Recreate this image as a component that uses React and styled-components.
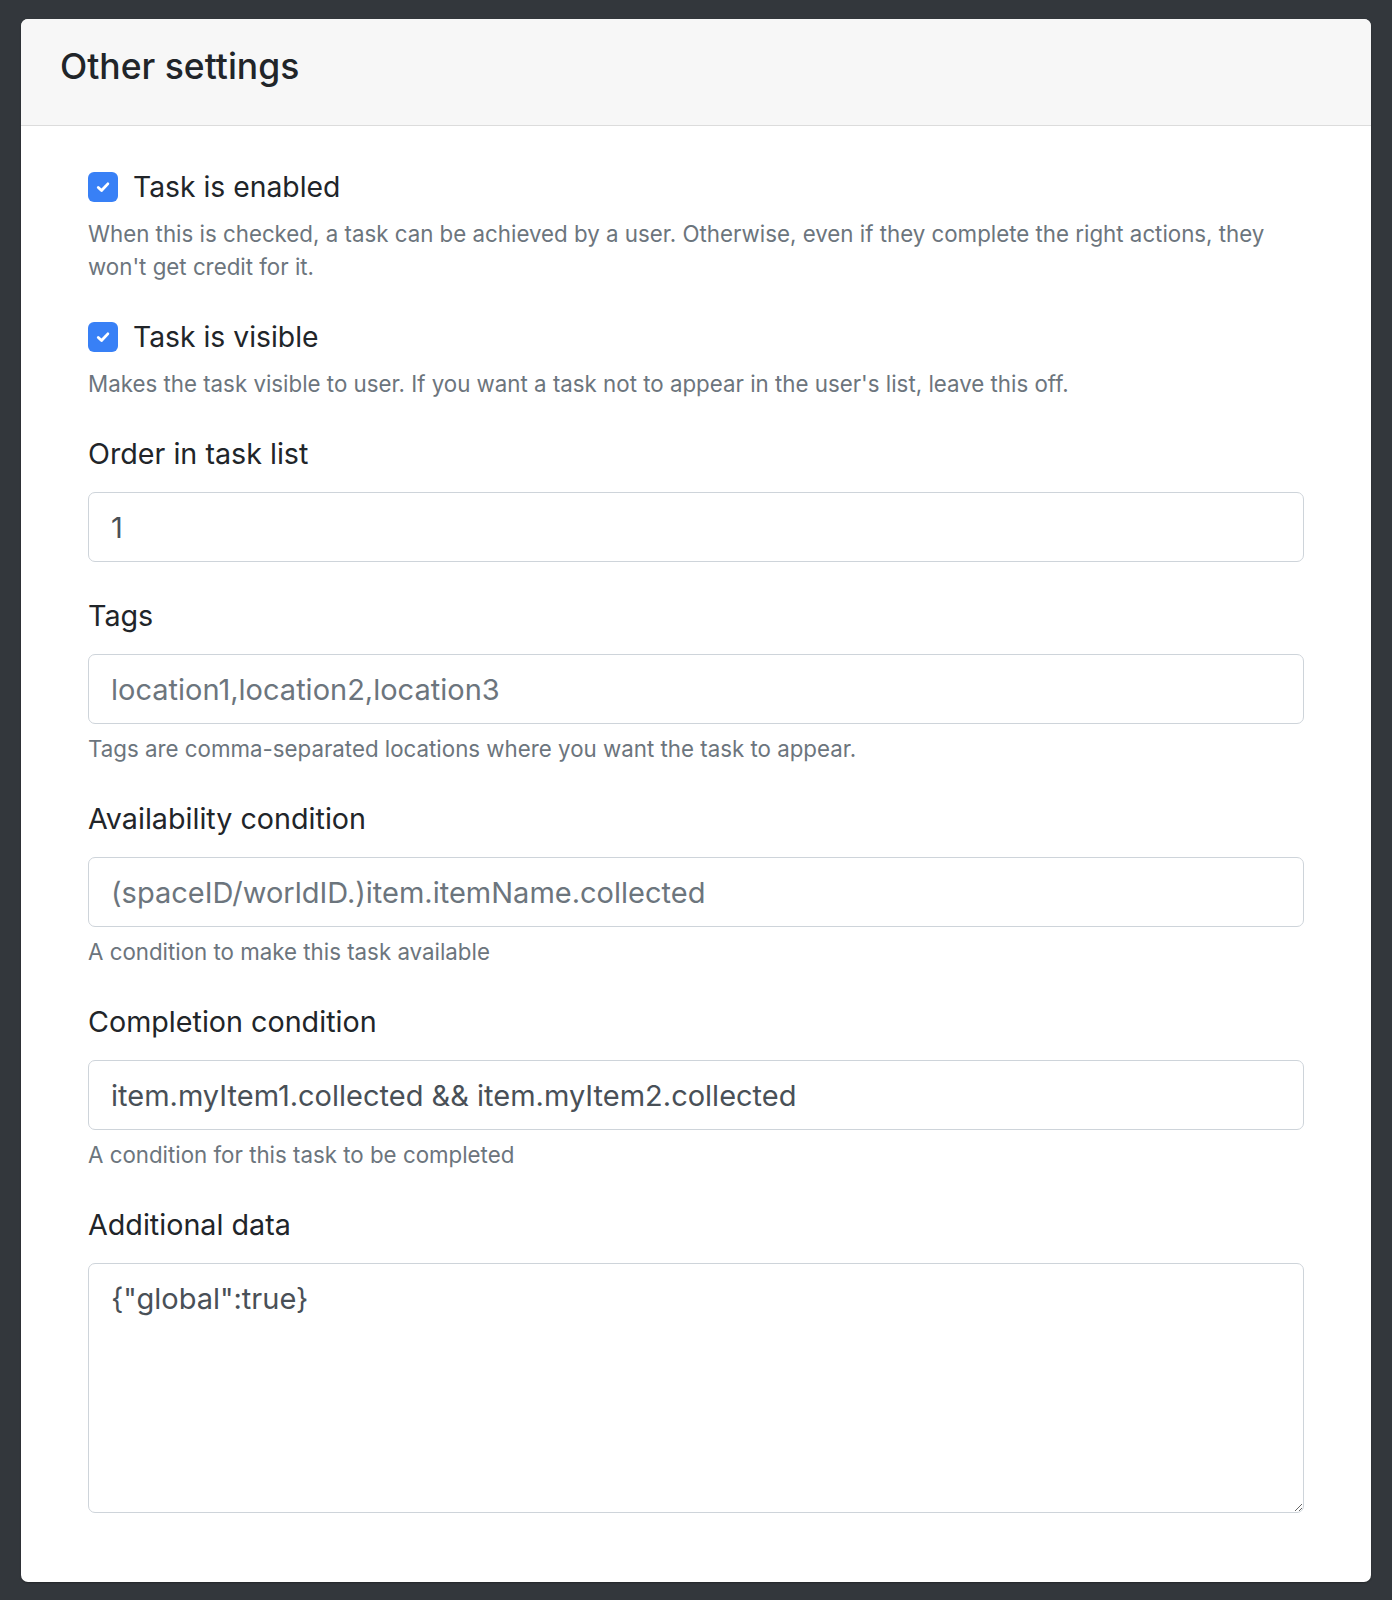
import React from 'react'
import styled, { createGlobalStyle } from 'styled-components'

const GlobalStyle = createGlobalStyle`
  html, body {
    margin: 0;
    padding: 0;
    background: #33373c;
  }
  body {
    font-family: Inter, "Noto Sans", "Liberation Sans", sans-serif;
    color: #212529;
  }
  * {
    box-sizing: border-box;
  }
`

const Page = styled.div`
  min-height: 1600px;
  padding: 19px 21px 20px;
`

const Card = styled.section`
  background: #fff;
  border-radius: 7px;
  overflow: hidden;
  box-shadow: 0 1px 2px rgba(0, 0, 0, 0.3);
`

const CardHeader = styled.header`
  background: #f7f7f7;
  border-bottom: 1px solid #dcdcdc;
  height: 107px;
  padding: 27px 39px 0;
`

const Title = styled.h2`
  margin: 0;
  font-size: 35.5px;
  line-height: 42px;
  font-weight: 500;
  color: #212529;
`

const CardBody = styled.div`
  padding: 46px 67px 69px;
  display: flex;
  flex-direction: column;
`

const Group = styled.div`
  display: flex;
  flex-direction: column;
  margin-bottom: ${p => p.$gap || 36}px;
  &:last-child {
    margin-bottom: 0;
  }
`

const CheckRow = styled.label`
  display: flex;
  align-items: center;
  gap: 15px;
  height: 30px;
  font-size: 28.3px;
  line-height: 32px;
  color: #212529;
`

const CheckBox = styled.span`
  width: 30px;
  height: 30px;
  border-radius: 6px;
  background: #3880f6;
  display: flex;
  align-items: center;
  justify-content: center;
  flex-shrink: 0;
`

const Label = styled.label`
  font-size: 28.7px;
  line-height: 36px;
  color: #212529;
  margin-bottom: 20px;
`

const Help = styled.small`
  display: block;
  font-size: 22.3px;
  line-height: 33px;
  color: #6c757d;
  margin-top: ${p => p.$top || 8}px;
`

const Input = styled.input`
  width: 100%;
  height: 70px;
  padding: 0 22px;
  font-family: inherit;
  font-size: 29px;
  color: #495057;
  background: #fff;
  border: 1px solid #ced4da;
  border-radius: 7px;
  outline: none;
  &::placeholder {
    color: #6c757d;
    opacity: 1;
  }
`

const TextArea = styled.textarea`
  width: 100%;
  height: 250px;
  padding: 12px 22px;
  font-family: inherit;
  font-size: 29px;
  line-height: 45px;
  color: #495057;
  background: #fff;
  border: 1px solid #ced4da;
  border-radius: 7px;
  outline: none;
  resize: vertical;
  display: block;
`

const Check = () => (
  <CheckBox>
    <svg width="18" height="18" viewBox="0 0 16 16">
      <path d="M3.8 8.4l2.9 2.7 5.6-5.9" fill="none" stroke="#fff" strokeWidth="2.5" strokeLinecap="round" strokeLinejoin="round" />
    </svg>
  </CheckBox>
)

const fields = [
  { label: 'Order in task list', value: '1' },
  { label: 'Tags', placeholder: 'location1,location2,location3', help: 'Tags are comma-separated locations where you want the task to appear.' },
  { label: 'Availability condition', placeholder: '(spaceID/worldID.)item.itemName.collected', help: 'A condition to make this task available' },
  { label: 'Completion condition', value: 'item.myItem1.collected && item.myItem2.collected', help: 'A condition for this task to be completed' },
]

const App = () => (
  <Page>
    <GlobalStyle />
    <Card>
      <CardHeader>
        <Title>Other settings</Title>
      </CardHeader>
      <CardBody>
        <Group $gap={39}>
          <CheckRow><Check />Task is enabled</CheckRow>
          <Help $top={15}>
            When this is checked, a task can be achieved by a user. Otherwise, even if they complete the right actions, they won't get credit for it.
          </Help>
        </Group>
        <Group>
          <CheckRow><Check />Task is visible</CheckRow>
          <Help $top={15}>
            Makes the task visible to user. If you want a task not to appear in the user's list, leave this off.
          </Help>
        </Group>
        {fields.map((f, i) => (
          <Group key={i}>
            <Label>{f.label}</Label>
            <Input readOnly value={f.value || ''} placeholder={f.placeholder} />
            {f.help && <Help>{f.help}</Help>}
          </Group>
        ))}
        <Group>
          <Label>Additional data</Label>
          <TextArea readOnly value={'{"global":true}'} />
        </Group>
      </CardBody>
    </Card>
  </Page>
)

export default App
